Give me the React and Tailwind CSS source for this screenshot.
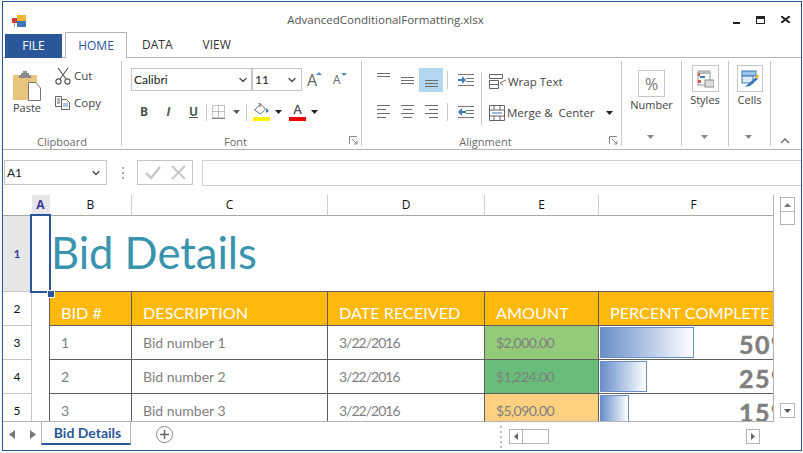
import { ChevronDown } from 'lucide-react'

const ui = { fontFamily: '"Open Sans", sans-serif' }
const calibri = { fontFamily: 'Lato, sans-serif' }

function Group({ w, label, launcher, children }) {
  return (
    <div className="flex flex-col h-[85px] border-r border-[#c6c6c6] shrink-0" style={{ width: w }}>
      <div className="flex-1 min-h-0">{children}</div>
      <div className={`relative h-[15px] text-center text-[11px] leading-[15px] text-[#6a6a6a] -mb-[3px] ${launcher ? 'pr-[12px]' : ''}`}>
        {label}
        {launcher && (
          <svg className="absolute right-[3px] top-[2px]" width="9" height="9" viewBox="0 0 9 9" fill="none" stroke="#8a8a8a">
            <path d="M0.5 8V0.5H8" />
            <path d="M3 3l5 5M8 5v3H5" />
          </svg>
        )}
      </div>
    </div>
  )
}

function Caret({ className = '', color = '#222' }) {
  return (
    <svg className={className} width="7" height="4" viewBox="0 0 7 4">
      <path d="M0 0h7L3.5 4z" fill={color} />
    </svg>
  )
}

function AlignIcon({ lines, active }) {
  return (
    <div className={`w-[24px] h-[24px] flex items-center justify-center ${active ? 'bg-[#b3d7f1]' : ''}`}>
      <svg width="15" height="24" viewBox="0 0 15 24" stroke="#6e6e6e">
        {lines.map(([y, x1, x2]) => (
          <path key={y} d={`M${x1} ${y}.5H${x2}`} />
        ))}
      </svg>
    </div>
  )
}

function BigButton({ label, children, top = 'mt-[8px]' }) {
  return (
    <div className={`flex flex-col items-center h-full ${top}`}>
      {children}
      <div className="text-[11px] leading-[14px] text-[#444] mt-[1px]">{label}</div>
    </div>
  )
}

function GroupCaret() {
  return <Caret className="block mx-auto mt-[1px] relative -left-[1px]" color="#888" />
}

function Ribbon() {
  return (
    <div className="flex h-[92px] pt-[3px] border-b border-[#b4b4b4] text-[#444]" style={ui}>
      <Group w={119} label="Clipboard">
        <div className="flex pl-[10px] pt-[10px]">
          <div className="flex flex-col items-center w-[28px]">
            <svg width="28" height="30" viewBox="0 0 28 30">
              <rect x="0" y="4" width="24" height="25" fill="#e9c47c" />
              <path d="M8 4V2h2V0h4v2h2v2h2v3H6V4z" fill="#8c8c8c" />
              <path d="M15.5 11.5h7l5 5.5v12.5h-12z" fill="#fff" stroke="#777" />
            </svg>
            <div className="text-[11px] leading-[14px]">Paste</div>
          </div>
          <div className="ml-[14px] -mt-[4px] text-[11.5px]">
            <div className="flex items-center h-[18px]">
              <svg width="16" height="17" viewBox="0 0 16 17" fill="none" stroke="#555" strokeWidth="1.1">
                <path d="M3 0l8 11M13 0L5 11" />
                <circle cx="3.5" cy="13.5" r="2.6" />
                <circle cx="12.5" cy="13.5" r="2.6" />
              </svg>
              <span className="ml-[3px]">Cut</span>
            </div>
            <div className="flex items-center h-[18px] mt-[9px]">
              <svg width="16" height="14" viewBox="0 0 16 14" fill="none" stroke="#666">
                <path d="M.5.5h6l0 10h-6zM2 3h3M2 5h3M2 7h3" />
                <path d="M6.5 3.5h5l3 3v7h-8z" fill="#fff" />
                <path d="M8 8h5M8 10h5" stroke="#5b8bc4" />
              </svg>
              <span className="ml-[3px]">Copy</span>
            </div>
          </div>
        </div>
      </Group>

      <Group w={240} label="Font" launcher>
        <div className="pl-[9px] pt-[7px]">
          <div className="flex items-center">
            <div className="flex items-center justify-between w-[121px] h-[23px] border border-[#c6c6c6] pl-[2px] pr-[2px] text-[12px] text-[#222]" style={calibri}>
              Calibri <ChevronDown size={12} strokeWidth={3} color="#555" />
            </div>
            <div className="flex items-center justify-between w-[50px] h-[23px] border border-[#c6c6c6] pl-[2px] pr-[3px] text-[12px] text-[#222]" style={calibri}>
              11 <ChevronDown size={12} strokeWidth={3} color="#555" />
            </div>
            <div className="relative ml-[5px] w-[15px] text-[16px] leading-[20px] text-[#666]">
              A
              <span className="absolute left-[9px] top-[2px]"><svg width="6" height="3"><path d="M3 0l3 3H0z" fill="#5b8bc4" /></svg></span>
            </div>
            <div className="relative ml-[11px] w-[13px] text-[12px] leading-[20px] text-[#666]">
              A
              <span className="absolute left-[8px] top-[3px]"><svg width="6" height="3"><path d="M0 0h6L3 3z" fill="#5b8bc4" /></svg></span>
            </div>
          </div>
          <div className="flex items-center h-[24px] mt-[9px] text-[12px] text-[#555]">
            <span className="w-[24px] text-center font-bold ml-[1px]">B</span>
            <span className="w-[25px] text-center italic font-bold">I</span>
            <span className="w-[25px] text-center font-bold underline">U</span>
            <div className="w-px h-[17px] bg-[#c6c6c6]" />
            <svg className="ml-[5px]" width="13" height="14" viewBox="0 0 13 14" fill="none" stroke="#888" strokeDasharray="1 1">
              <path d="M.5.5h12v12H.5zM6.5.5v12M.5 6.5h12" />
              <path d="M0 13.5h13" strokeDasharray="none" />
            </svg>
            <Caret className="ml-[8px]" color="#555" />
            <div className="w-px h-[17px] bg-[#c6c6c6] ml-[6px]" />
            <div className="ml-[5px] w-[18px] flex flex-col items-center">
              <svg width="17" height="13" viewBox="0 0 17 13" fill="none" stroke="#666">
                <path d="M1.5 7l6-6 5 5-5 5z" fill="#fff" />
                <path d="M5 0h2v4" />
                <path d="M13 5l3 3-3 2z" fill="#3f78b8" stroke="none" />
              </svg>
              <div className="w-[17px] h-[4px] bg-[#fff200] mt-[1px]" />
            </div>
            <Caret className="ml-[5px]" />
            <div className="ml-[7px] w-[17px] flex flex-col items-center">
              <span className="text-[13px] leading-[13px] font-semibold text-[#555]">A</span>
              <div className="w-[17px] h-[4px] bg-[#f00000] mt-[1px]" />
            </div>
            <Caret className="ml-[5px]" />
          </div>
        </div>
      </Group>

      <Group w={260} label="Alignment" launcher>
        <div className="flex pl-[9px] pt-[7px]">
          <div className="grid grid-cols-3 gap-y-[8px] w-[72px] h-fit">
            <AlignIcon lines={[[5, 1, 14], [8, 1, 14]]} />
            <AlignIcon lines={[[9, 1, 14], [12, 1, 14], [15, 1, 14]]} />
            <AlignIcon active lines={[[12, 1, 14], [15, 1, 14], [18, 1, 14]]} />
            <AlignIcon lines={[[5, 1, 14], [9, 1, 10], [13, 1, 14], [17, 1, 10]]} />
            <AlignIcon lines={[[5, 1, 14], [9, 3, 12], [13, 1, 14], [17, 3, 12]]} />
            <AlignIcon lines={[[5, 1, 14], [9, 5, 14], [13, 1, 14], [17, 5, 14]]} />
          </div>
          <div className="flex flex-col items-start w-[34px] ml-[4px]">
            <div className="flex items-center h-[24px]">
              <div className="w-px h-[18px] bg-[#c6c6c6] mr-[10px]" />
              <svg width="16" height="12" viewBox="0 0 16 12" fill="none" stroke="#777">
                <path d="M0 .5h16M8 4.5h8M8 7.5h8M0 11.5h16" />
                <path d="M0 6h4" stroke="#3f78b8" strokeWidth="2" />
                <path d="M4 2l4 4-4 4z" fill="#3f78b8" stroke="none" />
              </svg>
            </div>
            <div className="flex items-center h-[24px] mt-[8px]">
              <div className="w-px h-[18px] bg-[#c6c6c6] mr-[10px]" />
              <svg width="16" height="12" viewBox="0 0 16 12" fill="none" stroke="#777">
                <path d="M0 .5h16M8 4.5h8M8 7.5h8M0 11.5h16" />
                <path d="M4 6h4" stroke="#3f78b8" strokeWidth="2" />
                <path d="M4 2L0 6l4 4z" fill="#3f78b8" stroke="none" />
              </svg>
            </div>
          </div>
          <div className="w-px h-[53px] bg-[#c6c6c6] mt-[4px]" />
          <div className="pl-[7px] text-[11.5px]">
            <div className="flex items-center h-[26px] mt-[1px]">
              <svg width="18" height="16" viewBox="0 0 18 16" fill="none" stroke="#666">
                <path d="M.5.5h13v4H.5zM.5 6.5h9v4h-9zM.5 10.5h9v4h-9z" />
                <path d="M11 9l6-3M11 9l3 2" />
              </svg>
              <span className="ml-[1px]">Wrap Text</span>
            </div>
            <div className="flex items-center h-[26px] mt-[5px]">
              <svg width="16" height="16" viewBox="0 0 16 16" fill="none" stroke="#666">
                <path d="M.5.5h15v15H.5zM.5 5h15M.5 11h15M5 .5V5M11 .5V5M5 11v4.500M11 11v4.500" />
                <path d="M3 8h10" stroke="#3f78b8" />
              </svg>
              <span className="ml-[2px] whitespace-pre">Merge &amp;  Center</span>
              <Caret className="ml-[11px]" />
            </div>
          </div>
        </div>
      </Group>

      <Group w={60} label={<GroupCaret />}>
        <BigButton label="Number" top="mt-[9px]">
          <div className="w-[27px] h-[27px] border border-[#c6c6c6] flex items-center justify-center text-[16px] text-[#777]">%</div>
        </BigButton>
      </Group>
      <Group w={47} label={<GroupCaret />}>
        <BigButton label="Styles" top="mt-[4px]">
          <div className="w-[27px] h-[27px] border border-[#c6c6c6] flex items-center justify-center">
            <svg width="17" height="18" viewBox="0 0 17 18">
              <rect x="1" y="1" width="12" height="14" fill="#fff" stroke="#9a9a9a" />
              <rect x="1" y="1" width="12" height="3" fill="#b8b8b8" />
              <rect x="3" y="6" width="5" height="2" fill="#3f78b8" />
              <rect x="1" y="3" width="2" height="3" fill="#d9534f" />
              <rect x="1" y="10" width="3" height="3" fill="#d9534f" />
              <rect x="8" y="10" width="9" height="7" fill="#ddd" stroke="#888" />
            </svg>
          </div>
        </BigButton>
      </Group>
      <Group w={42} label={<GroupCaret />}>
        <BigButton label="Cells" top="mt-[4px]">
          <div className="w-[26px] h-[27px] border border-[#c6c6c6] flex items-center justify-center">
            <svg width="18" height="18" viewBox="0 0 18 18">
              <rect x="1" y="1" width="14" height="5" fill="#9cc3ea" stroke="#3f78b8" />
              <rect x="1" y="6" width="11" height="7" fill="#dcebf8" stroke="#3f78b8" />
              <path d="M4 17l3-3 8-7 2 2-8 7z" fill="#3f78b8" />
              <path d="M14 7l3-3 1 2-2 3z" fill="#f0b429" />
            </svg>
          </div>
        </BigButton>
      </Group>
      <div className="flex-1 flex items-end justify-center pb-[5px] pr-[2px]">
        <svg width="10" height="6" viewBox="0 0 10 6" fill="none" stroke="#777" strokeWidth="1.600">
          <path d="M1 5l4-4 4 4" />
        </svg>
      </div>
    </div>
  )
}

const widths = 'grid-cols-[29px_18px_82px_196px_157px_114px_175px]'

function RowHead({ n, h, selected }) {
  return (
    <div className={`flex items-center justify-center border-b border-r border-[#c6c6c6] text-[12px] ${h} ${selected ? 'bg-[#e6e6e6] text-[#3a3a9a] font-bold' : 'text-[#111]'}`} style={calibri}>
      {n}
    </div>
  )
}

function ColHead({ label, selected, className = '' }) {
  return (
    <div className={`flex items-center justify-center h-[21px] border-b border-[#a8a8a8] border-r text-[12px] ${selected ? 'bg-[#e6e6e6] text-[#3a3a9a] font-bold border-r-[#e6e6e6]' : 'text-[#111] border-r-[#d0d0d0]'} ${className}`} style={ui}>
      {label}
    </div>
  )
}

const rows = [
  { n: 3, id: 1, date: '3/22/2016', amount: '$2,000.00', color: 'bg-[#93cb7b]', bar: 'w-[94px]', pct: '50%' },
  { n: 4, id: 2, date: '3/22/2016', amount: '$1,224.00', color: 'bg-[#68be79]', bar: 'w-[47px]', pct: '25%' },
  { n: 5, id: 3, date: '3/22/2016', amount: '$5,090.00', color: 'bg-[#fdd17f]', bar: 'w-[29px]', pct: '15%' },
]

const cell = 'border-b border-r border-[#5f5f5f] flex items-center overflow-hidden'

function Sheet() {
  return (
    <div className="flex h-[226px]">
      <div className="w-[771px] h-[226px] overflow-hidden border-r border-[#b4b4b4] shrink-0">
        <div className={`grid ${widths} w-[771px]`}>
          <div className="h-[21px] border-b border-[#a8a8a8]" />
          <ColHead label="A" selected />
          <ColHead label="B" />
          <ColHead label="C" />
          <ColHead label="D" />
          <ColHead label="E" />
          <ColHead label="F" className="pl-[14px] border-r-0" />

          <RowHead n={1} h="h-[76px]" selected />
          <div className="relative">
            <div className="absolute -left-[2px] -top-[2px] w-[21px] h-[79px] border-2 border-[#2b579a]" />
            <div className="absolute left-[15px] top-[74px] w-[6px] h-[6px] bg-[#2b579a] border border-white box-content z-10" />
          </div>
          <div className="col-span-5 h-[76px] flex items-center pl-[1px] pb-[2px] text-[43.5px] text-[#3b94ad] whitespace-nowrap" style={calibri}>
            Bid Details
          </div>

          <RowHead n={2} h="h-[34px]" />
          <div className="border-r border-[#5f5f5f]" />
          {['BID #', 'DESCRIPTION', 'DATE RECEIVED', 'AMOUNT', 'PERCENT COMPLETE'].map((t) => (
            <div key={t} className={`${cell} border-t -mt-px h-[35px] bg-[#ffb80c] text-white text-[16.2px] pt-[9px] pl-[11px] whitespace-nowrap`} style={calibri}>
              {t}
            </div>
          ))}

          {rows.map((r) => (
            <div key={r.n} className="contents">
              <RowHead n={r.n} h="h-[34px]" />
              <div className="border-r border-[#5f5f5f]" />
              <div className={`${cell} pl-[11px] pb-[1px] text-[14px] text-[#7f7f7f]`} style={calibri}>{r.id}</div>
              <div className={`${cell} pl-[11px] pb-[1px] text-[14px] text-[#7f7f7f]`} style={calibri}>Bid number {r.id}</div>
              <div className={`${cell} pl-[11px] pb-[1px] text-[14px] tracking-[-1px] text-[#7f7f7f]`} style={calibri}>{r.date}</div>
              <div className={`${cell} pl-[11px] pb-[1px] text-[14px] tracking-[-0.6px] text-[#7f7f7f] ${r.color}`} style={calibri}>{r.amount}</div>
              <div className="relative h-[34px] border-b border-[#5f5f5f] overflow-hidden" style={calibri}>
                <div className={`absolute left-[1px] top-[1px] h-[31px] border border-[#6a8fc8] bg-gradient-to-r from-[#6a8fc8] to-white ${r.bar}`} />
                <div className="absolute left-[140px] top-0 text-[25px] tracking-[1.5px] font-bold [-webkit-text-stroke:0.5px_#7f7f7f] text-[#7f7f7f] whitespace-nowrap">{r.pct}</div>
              </div>
            </div>
          ))}
        </div>
      </div>
      <div className="flex-1 flex flex-col items-center pt-[2px] pr-[1px] pb-[3px]">
        <div className="flex items-center justify-center w-[15px] h-[15px] border border-[#b4b4b4]">
          <svg width="7" height="4"><path d="M3.5 0L7 4H0z" fill="#777" /></svg>
        </div>
        <div className="w-[15px] h-[13px] border border-t-0 border-[#b4b4b4]" />
        <div className="flex-1" />
        <div className="flex items-center justify-center w-[15px] h-[15px] border border-[#b4b4b4]">
          <svg width="7" height="4"><path d="M0 0h7L3.5 4z" fill="#555" /></svg>
        </div>
      </div>
    </div>
  )
}

function ScrollBtn({ dir }) {
  return (
    <div className="flex items-center justify-center w-[14px] h-[15px] border border-[#b4b4b4]">
      <svg width="4" height="7">
        <path d={dir === 'left' ? 'M4 0v7L0 3.500z' : 'M0 0v7l4-3.500z'} fill="#666" />
      </svg>
    </div>
  )
}

export default function App() {
  return (
    <div className="w-[803px] h-[453px] bg-[#f7f7f7] pl-[2px] pt-[1px] overflow-hidden">
      <div className="w-[800px] h-[450px] bg-white border border-[#2b579a] overflow-hidden" style={ui}>
        {/* title bar */}
        <div className="relative h-[28px] flex items-center justify-center text-[11.5px] text-[#555] pt-[8px] pr-[33px]">
          <svg className="absolute left-[9px] top-[13px]" width="15" height="13" viewBox="0 0 15 13">
            <rect x="5" y="0" width="9" height="6" fill="#f2b632" />
            <rect x="5" y="6" width="9" height="6" fill="#3f78b8" />
            <rect x="0" y="3" width="5" height="5" fill="#d63b3b" />
            <rect x="2" y="8" width="1" height="4" fill="#999" />
          </svg>
          AdvancedConditionalFormatting.xlsx
          <div className="absolute right-[11px] top-[13px] flex items-center gap-[16px]">
            <div className="w-[7px] h-[2px] bg-[#222] mt-[7px]" />
            <div className="w-[9px] h-[8px] border border-t-[3px] border-[#222]" />
            <svg width="9" height="7" viewBox="0 0 9 7" stroke="#222" strokeWidth="2"><path d="M0 0l9 7M9 0L0 7" /></svg>
          </div>
        </div>

        {/* tabs */}
        <div className="flex items-end h-[28px] border-b border-[#b4b4b4] pl-[2px] text-[12px]">
          <div className="flex items-center justify-center w-[57px] h-[24px] bg-[#2b579a] text-white -mb-px">FILE</div>
          <div className="flex items-center justify-center w-[62px] h-[26px] ml-[3px] border border-b-0 border-[#b4b4b4] bg-white text-[#2b579a] -mb-px">HOME</div>
          <div className="flex items-center h-[24px] ml-[15px] text-[#333]">DATA</div>
          <div className="flex items-center h-[24px] ml-[30px] text-[#333]">VIEW</div>
        </div>

        <Ribbon />

        {/* formula bar */}
        <div className="flex h-[45px] pt-[10px] pl-[1px]">
          <div className="flex items-center justify-between w-[103px] h-[25px] border border-[#c6c6c6] pl-[2px] pr-[4px] text-[12px] text-[#222]" style={calibri}>
            A1 <ChevronDown size={12} strokeWidth={3} color="#555" />
          </div>
          <div className="flex flex-col justify-center gap-[3px] w-[2px] h-[25px] ml-[15px]">
            <div className="w-[2px] h-[2px] bg-[#aaa]" />
            <div className="w-[2px] h-[2px] bg-[#aaa]" />
            <div className="w-[2px] h-[2px] bg-[#aaa]" />
          </div>
          <div className="flex items-center justify-center gap-[10px] w-[56px] h-[25px] ml-[13px] border border-[#c6c6c6]">
            <svg width="16" height="14" viewBox="0 0 16 14" fill="none" stroke="#c8c8c8" strokeWidth="2.500"><path d="M1 7l5 5 9-11" /></svg>
            <svg width="15" height="15" viewBox="0 0 15 15" fill="none" stroke="#c8c8c8" strokeWidth="2"><path d="M1 1l13 13M14 1L1 14" /></svg>
          </div>
          <div className="flex-1 h-[26px] ml-[9px] border border-r-0 border-[#d0d0d0]" />
        </div>

        <Sheet />

        {/* sheet tabs */}
        <div className="flex h-[28px] w-[771px] border-t border-[#b4b4b4] relative">
          <div className="flex items-center gap-[15px] pl-[6px] w-[38px] h-[24px]">
            <svg width="6" height="9"><path d="M6 0v9L0 4.500z" fill="#777" /></svg>
            <svg width="6" height="9"><path d="M0 0v9l6-4.500z" fill="#777" /></svg>
          </div>
          <div className="flex items-center justify-center w-[90px] h-[24px] -mt-px pl-[3px] border-l border-r border-[#b4b4b4] border-b-2 border-b-[#2b579a] text-[14px] font-bold text-[#2b579a]" style={calibri}>
            Bid Details
          </div>
          <div className="flex items-center justify-center w-[17px] h-[17px] ml-[25px] mt-[4px] rounded-full border border-[#888]">
            <svg width="9" height="9" stroke="#666" strokeWidth="1.500"><path d="M4.500 0v9M0 4.500h9" /></svg>
          </div>
          <div className="flex flex-col gap-[3px] ml-[327px] mt-[4px] w-[2px]">
            <div className="w-[2px] h-[2px] bg-[#bbb]" />
            <div className="w-[2px] h-[2px] bg-[#bbb]" />
            <div className="w-[2px] h-[2px] bg-[#bbb]" />
            <div className="w-[2px] h-[2px] bg-[#bbb]" />
            <div className="w-[2px] h-[2px] bg-[#bbb]" />
          </div>
          <div className="flex ml-[7px] mt-[7px] h-[15px]">
            <ScrollBtn dir="left" />
            <div className="w-[26px] h-[15px] border border-l-0 border-[#b4b4b4]" />
            <div className="w-[197px]" />
            <ScrollBtn dir="right" />
          </div>
        </div>
      </div>
    </div>
  )
}
